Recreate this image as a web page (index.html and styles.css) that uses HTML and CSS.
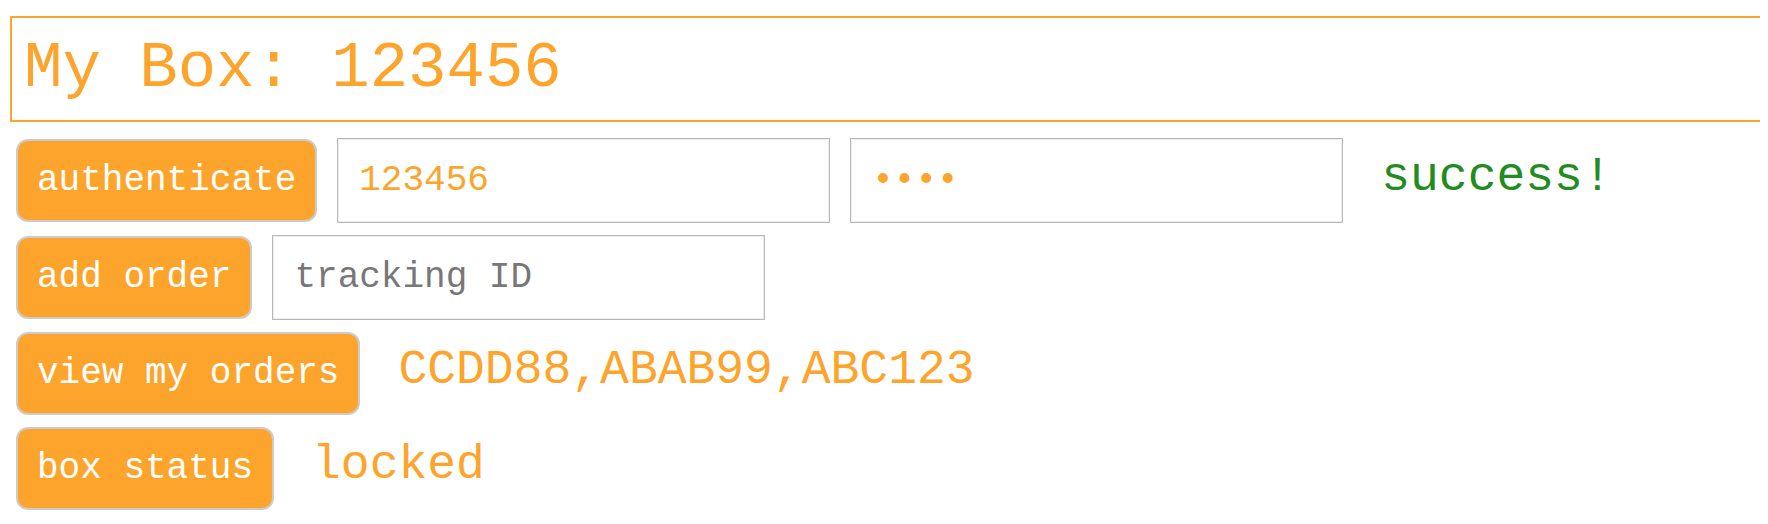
FILE: index.html
```html
<!DOCTYPE html>
<html lang="en">
<head>
<meta charset="utf-8">
<title>My Box</title>
<link rel="stylesheet" href="styles.css">
</head>
<body>
<div class="page">
  <div class="box-title">My Box: 123456</div>
  <div class="controls">
    <div class="row">
      <button class="btn" type="button">authenticate</button>
      <input class="field" type="text" value="123456">
      <input class="field" type="password" value="1234">
      <span class="result success">success!</span>
    </div>
    <div class="row">
      <button class="btn" type="button">add order</button>
      <input class="field" type="text" placeholder="tracking ID">
    </div>
    <div class="row">
      <button class="btn" type="button">view my orders</button>
      <span class="result">CCDD88,ABAB99,ABC123</span>
    </div>
    <div class="row">
      <button class="btn" type="button">box status</button>
      <span class="result">locked</span>
    </div>
  </div>
</div>
</body>
</html>
```
FILE: styles.css
```css
body {
  margin: 8px;
  background: #ffffff;
  font-family: "Courier New", "Nimbus Mono PS", "Nimbus Mono L", FreeMono, Courier, "Liberation Mono", monospace;
  color: #fda42c;
}

.page {
  display: flex;
  flex-direction: column;
}

.box-title {
  margin: 8px -8px 16px 2px;
  padding: 15px 12px;
  border: 2px solid #fda42c;
  border-right: 0;
  font-size: 64px;
  line-height: normal;
  color: #fda42c;
  white-space: nowrap;
}

.controls {
  display: flex;
  flex-direction: column;
  gap: 12px;
  margin-left: 8px;
}

.row {
  display: flex;
  align-items: baseline;
  gap: 20px;
}

.btn {
  font-family: inherit;
  font-size: 36px;
  line-height: normal;
  padding: 19px;
  margin: 0;
  color: #ffffff;
  background: #fda42c;
  border: 2px solid #cccccc;
  border-radius: 12px;
  white-space: nowrap;
}

.field {
  box-sizing: border-box;
  width: 493px;
  margin: 0;
  padding: 21px;
  font-family: inherit;
  font-size: 36px;
  line-height: normal;
  color: #fda42c;
  background: #ffffff;
  border: 1px solid #b9b9b9;
  box-shadow: inset 0 0 0 1px #ececec;
  border-radius: 0;
  outline: none;
}

.field::placeholder {
  color: #777777;
  opacity: 1;
}

.result {
  margin-left: 18px;
  font-size: 48px;
  line-height: normal;
  color: #fda42c;
  white-space: nowrap;
}

.result.success {
  color: #228b22;
}
```
